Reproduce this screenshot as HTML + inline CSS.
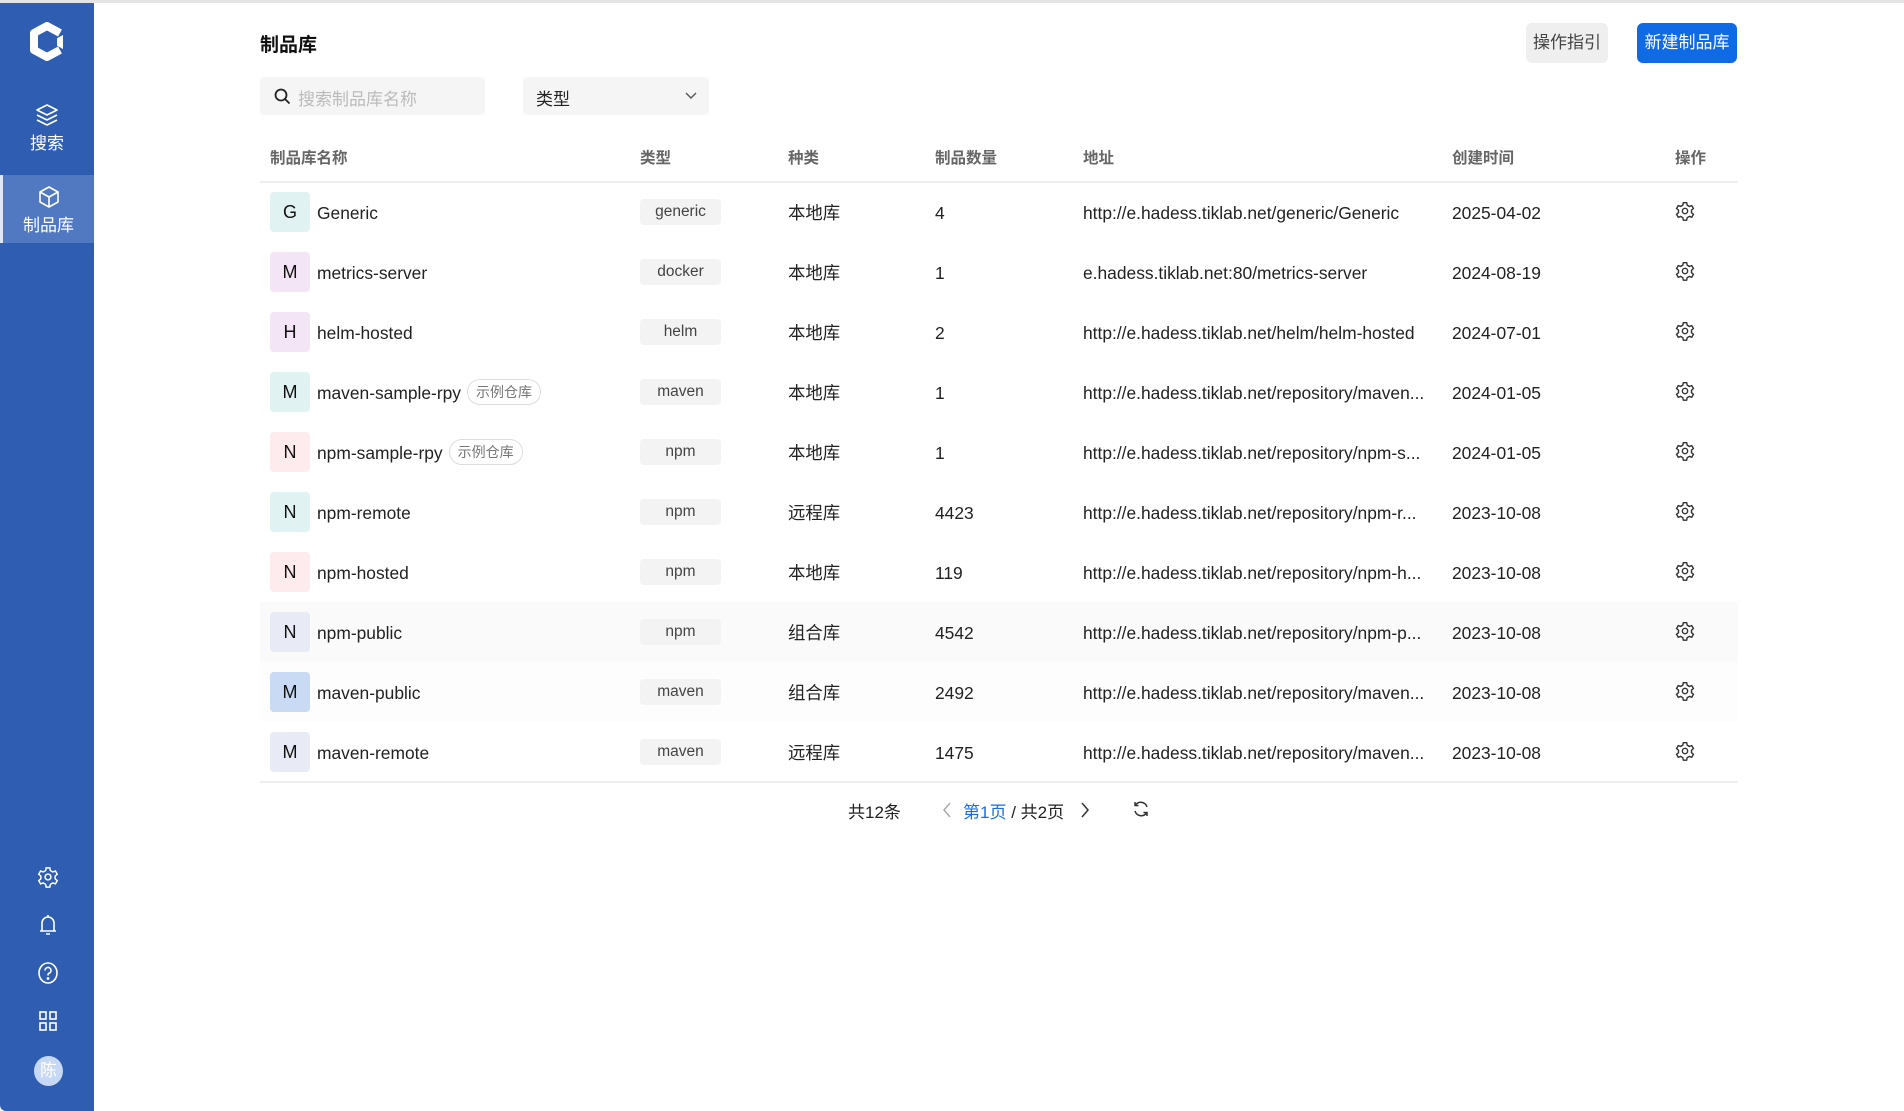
<!DOCTYPE html>
<html><head><meta charset="utf-8"><style>
*{margin:0;padding:0;box-sizing:border-box}
body{width:1904px;height:1111px;overflow:hidden;background:#fff;font-family:"Liberation Sans","Noto Sans CJK SC",sans-serif;color:#222;position:relative}
.topline{position:absolute;left:0;top:0;width:1904px;height:3px;background:#e4e4e4}
.side{position:absolute;left:0;top:3px;width:94px;height:1108px;background:#2f5db1;border-bottom-left-radius:6px}
.side .item{position:absolute;left:0;width:94px;text-align:center;color:#fff;font-size:17px}
.abs{position:absolute}
.title{left:260px;top:30px;font-size:19px;font-weight:bold;color:#111}
.search{left:260px;top:77px;width:225px;height:38px;background:#f5f5f5;border-radius:3px}
.sel{left:523px;top:77px;width:186px;height:38px;background:#f5f5f5;border-radius:3px}
.btn{top:23px;height:40px;border-radius:6px;font-size:17px;line-height:40px;text-align:center}
.hd{top:146px;font-size:15.5px;color:#666;font-weight:bold}
.row{position:absolute;left:260px;width:1478px;height:60px}
.row>*{position:absolute;top:1px;line-height:60px;font-size:17.4px}
.av{left:10px!important;top:10px!important;width:40px;height:40px;line-height:40px!important;text-align:center;border-radius:4px;font-size:18px!important;color:#111}
.nm{left:57px}
.tag{left:380px;top:17px!important;width:81px;height:26px;line-height:26px!important;text-align:center;background:#f3f3f3;border-radius:4px;font-size:15.5px!important;color:#444}
.kd{left:528px}.ct{left:675px}.ad{left:823px}.tm{left:1192px}
.gear{left:1415px;top:19px!important;line-height:0!important;height:20px}
.ex{display:inline-block;margin-left:6px;border:1px solid #ddd;border-radius:13px;padding:0 8px;height:26px;line-height:24px;font-size:14px;color:#777;vertical-align:middle;position:relative;top:-2px}
</style></head><body>
<div class="topline"></div>
<div class="side">
 <svg class="abs" style="left:27px;top:19px" width="40" height="42" viewBox="0 0 40 42"><path d="M33 11 L20 4 L7 11 L7 28 L20 35 L33 28" fill="none" stroke="#fff" stroke-width="8" stroke-linejoin="round"/><path d="M23 20 L36 13 L36 27 Z" fill="#fff"/><path d="M26 20 L36 14.5 L36 25.5 Z" fill="#fff"/><path d="M21 20 L30 15 L30 25 Z" fill="#2f5db1"/></svg>
 <div class="item" style="top:100px">
  <svg width="26" height="24" viewBox="0 0 26 24" fill="none" stroke="#fff" stroke-width="1.6" stroke-linejoin="round"><path d="M13 2 L23 7 L13 12 L3 7 Z"/><path d="M3 12 L13 17 L23 12"/><path d="M3 17 L13 22 L23 17"/></svg>
  <div style="margin-top:-3px">搜索</div></div>
 <div class="item" style="top:172px;height:68px;background:#5079c2;border-left:3px solid #dfe7f6;padding-top:10px">
  <svg width="24" height="24" viewBox="0 0 24 24" fill="none" stroke="#fff" stroke-width="1.6" stroke-linejoin="round"><path d="M12 2 L21 7 L21 17 L12 22 L3 17 L3 7 Z"/><path d="M3 7 L12 12 L21 7 M12 12 L12 22"/></svg>
  <div style="margin-top:-3px">制品库</div></div>
 <svg class="abs" style="left:37px;top:862px" width="22" height="24" viewBox="0 0 24 24" fill="none" stroke="#fff" stroke-width="1.6"><circle cx="12" cy="12" r="3.2"/><path d="M10 2h4l.6 3 2.6 1.5 2.9-1 2 3.5-2.3 2v3l2.3 2-2 3.5-2.9-1-2.6 1.5-.6 3h-4l-.6-3-2.6-1.5-2.9 1-2-3.5 2.3-2v-3l-2.3-2 2-3.5 2.9 1L9.4 5z"/></svg>
 <svg class="abs" style="left:38px;top:910px" width="20" height="24" viewBox="0 0 20 24" fill="none" stroke="#fff" stroke-width="1.6"><path d="M10 2v2M4 18V10a6 6 0 0 1 12 0v8H4zM2 18h16M8 21h4"/></svg>
 <svg class="abs" style="left:37px;top:958px" width="22" height="24" viewBox="0 0 22 24" fill="none" stroke="#fff" stroke-width="1.6"><ellipse cx="11" cy="12" rx="9" ry="10"/><path d="M8 9.5a3 3 0 1 1 4 2.8c-1 .4-1 1-1 2.2"/><circle cx="11" cy="17.5" r=".6" fill="#fff"/></svg>
 <svg class="abs" style="left:39px;top:1008px" width="18" height="20" viewBox="0 0 18 20" fill="none" stroke="#fff" stroke-width="1.6"><rect x="1" y="1" width="6" height="7"/><rect x="11" y="1" width="6" height="7"/><rect x="1" y="12" width="6" height="7"/><rect x="11" y="12" width="6" height="7"/></svg>
 <div class="abs" style="left:34px;top:1053px;width:29px;height:30px;border-radius:50%;background:#c7d8f4;color:#fff;font-size:17px;text-align:center;line-height:30px">陈</div>
</div>

<div class="abs title">制品库</div>
<div class="abs btn" style="left:1526px;width:82px;background:#efefef;color:#444">操作指引</div>
<div class="abs btn" style="left:1637px;width:100px;background:#0f6ae6;color:#fff">新建制品库</div>
<div class="abs search"><svg class="abs" style="left:14px;top:11px" width="17" height="17" viewBox="0 0 17 17" fill="none" stroke="#222" stroke-width="1.8"><circle cx="7" cy="7" r="5.5"/><path d="M11 11l4.5 4.5"/></svg><span class="abs" style="left:38px;top:8px;font-size:17px;color:#bbb">搜索制品库名称</span></div>
<div class="abs sel"><span class="abs" style="left:13px;top:8px;font-size:17px;color:#222">类型</span><svg class="abs" style="left:162px;top:15px" width="12" height="8" viewBox="0 0 12 8" fill="none" stroke="#555" stroke-width="1.4"><path d="M1 1l5 5 5-5"/></svg></div>

<div class="abs hd" style="left:270px">制品库名称</div>
<div class="abs hd" style="left:640px">类型</div>
<div class="abs hd" style="left:788px">种类</div>
<div class="abs hd" style="left:935px">制品数量</div>
<div class="abs hd" style="left:1083px">地址</div>
<div class="abs hd" style="left:1452px">创建时间</div>
<div class="abs hd" style="left:1675px">操作</div>
<div class="abs" style="left:260px;top:181px;width:1478px;height:2px;background:#eee"></div>
<div class="abs" style="left:260px;top:602px;width:1478px;height:60px;background:#fafafa"></div>
<div class="abs" style="left:260px;top:662px;width:1478px;height:60px;background:#fdfdfd"></div>
<div class="abs" style="left:260px;top:781px;width:1478px;height:2px;background:#eee"></div>

<div id="rows"></div>
<script>
var g='<svg width="20" height="20" viewBox="0 0 24 24" fill="none" stroke="#333" stroke-width="1.7"><circle cx="12" cy="12" r="3.2"/><path d="M10 2h4l.6 3 2.6 1.5 2.9-1 2 3.5-2.3 2v3l2.3 2-2 3.5-2.9-1-2.6 1.5-.6 3h-4l-.6-3-2.6-1.5-2.9 1-2-3.5 2.3-2v-3l-2.3-2 2-3.5 2.9 1L9.4 5z"/></svg>';
var d=[["G","#e0f2f1","Generic","","generic","本地库","4","http://e.hadess.tiklab.net/generic/Generic","2025-04-02"],
["M","#f3e5f5","metrics-server","","docker","本地库","1","e.hadess.tiklab.net:80/metrics-server","2024-08-19"],
["H","#f3e5f5","helm-hosted","","helm","本地库","2","http://e.hadess.tiklab.net/helm/helm-hosted","2024-07-01"],
["M","#e0f2f1","maven-sample-rpy","1","maven","本地库","1","http://e.hadess.tiklab.net/repository/maven...","2024-01-05"],
["N","#fdebee","npm-sample-rpy","1","npm","本地库","1","http://e.hadess.tiklab.net/repository/npm-s...","2024-01-05"],
["N","#e0f2f1","npm-remote","","npm","远程库","4423","http://e.hadess.tiklab.net/repository/npm-r...","2023-10-08"],
["N","#fdebee","npm-hosted","","npm","本地库","119","http://e.hadess.tiklab.net/repository/npm-h...","2023-10-08"],
["N","#e8eaf6","npm-public","","npm","组合库","4542","http://e.hadess.tiklab.net/repository/npm-p...","2023-10-08"],
["M","#c9dbf4","maven-public","","maven","组合库","2492","http://e.hadess.tiklab.net/repository/maven...","2023-10-08"],
["M","#e8eaf6","maven-remote","","maven","远程库","1475","http://e.hadess.tiklab.net/repository/maven...","2023-10-08"]];
var h='';d.forEach(function(r,i){h+='<div class="row" style="top:'+(182+i*60)+'px"><div class="av" style="background:'+r[1]+'">'+r[0]+'</div><div class="nm">'+r[2]+(r[3]?'<span class="ex">示例仓库</span>':'')+'</div><div class="tag">'+r[4]+'</div><div class="kd">'+r[5]+'</div><div class="ct">'+r[6]+'</div><div class="ad">'+r[7]+'</div><div class="tm">'+r[8]+'</div><div class="gear">'+g+'</div></div>';});
document.getElementById('rows').innerHTML=h;
</script>

<div class="abs" style="left:848px;top:798px;font-size:17px">共12条</div>
<svg class="abs" style="left:942px;top:802px" width="10" height="16" viewBox="0 0 10 16" fill="none" stroke="#aaa" stroke-width="1.5"><path d="M8 1L2 8l6 7"/></svg>
<div class="abs" style="left:963px;top:798px;font-size:17px"><span style="color:#1a6fe0">第1页</span> / 共2页</div>
<svg class="abs" style="left:1080px;top:802px" width="10" height="16" viewBox="0 0 10 16" fill="none" stroke="#333" stroke-width="1.5"><path d="M2 1l6 7-6 7"/></svg>
<svg class="abs" style="left:1132px;top:800px" width="18" height="18" viewBox="0 0 18 18" fill="none" stroke="#333" stroke-width="1.5"><path d="M15 7A6.5 6.5 0 0 0 3.5 5M3 11a6.5 6.5 0 0 0 11.5 2"/><path d="M3 2v3.5h3.5M15 16v-3.5h-3.5"/></svg>
</body></html>
